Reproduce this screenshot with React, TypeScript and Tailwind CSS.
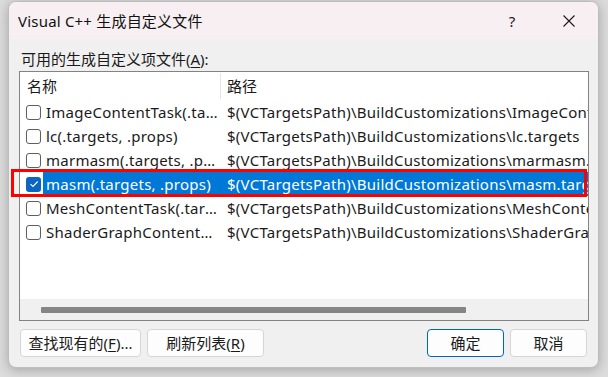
import React from "react";

const FONT = {
  fontFamily: '"Noto Sans", "Noto Sans CJK SC", sans-serif',
};

const rows = [
  { name: "ImageContentTask(.targets, .props)", path: "$(VCTargetsPath)\\BuildCustomizations\\ImageContentTask.targets", checked: false },
  { name: "lc(.targets, .props)", path: "$(VCTargetsPath)\\BuildCustomizations\\lc.targets", checked: false },
  { name: "marmasm(.targets, .props)", path: "$(VCTargetsPath)\\BuildCustomizations\\marmasm.targets", checked: false },
  { name: "masm(.targets, .props)", path: "$(VCTargetsPath)\\BuildCustomizations\\masm.targets", checked: true },
  { name: "MeshContentTask(.targets, .props)", path: "$(VCTargetsPath)\\BuildCustomizations\\MeshContentTask.targets", checked: false },
  { name: "ShaderGraphContentTask(.targets, .props)", path: "$(VCTargetsPath)\\BuildCustomizations\\ShaderGraphContentTask.targets", checked: false },
];

function CheckBox({ checked }: { checked: boolean }) {
  if (checked) {
    return (
      <div className="w-[15px] h-[15px] rounded-[3px] bg-[#0a66c2] flex items-center justify-center shrink-0">
        <svg width="10" height="8" viewBox="0 0 10 8">
          <path d="M1.5 4.2 L4 6.5 L8.7 1.5" stroke="#fff" strokeWidth="1.1" fill="none" />
        </svg>
      </div>
    );
  }
  return <div className="w-[15px] h-[15px] rounded-[3px] border border-[#5e5e5e] bg-white shrink-0" />;
}

export default function App() {
  return (
    <div className="w-[608px] h-[377px] bg-[#dcdcdc] relative overflow-hidden text-[#1a1a1a]" style={FONT}>
      <div className="absolute left-[8px] top-[1px] w-[591px] h-[367px] rounded-[8px] overflow-hidden bg-[#f0f0f0] border border-[#bdbdbd] shadow-[0_2px_12px_rgba(0,0,0,0.25)] flex flex-col">
        {/* title bar */}
        <div className="h-[37px] bg-[#f7eff2] flex items-center pl-[9px] pr-[20px] shrink-0">
          <div className="text-[15px] leading-[20px] flex-1 text-[#111] tracking-[0.2px]">Visual C++ 生成自定义文件</div>
          <div className="text-[15px] leading-[20px] w-[16px] text-center mr-[43px]">?</div>
          <svg width="12" height="12" viewBox="0 0 12 12" className="mr-[3px]">
            <path d="M0.5 0.5 L11.5 11.5 M11.5 0.5 L0.5 11.5" stroke="#1a1a1a" strokeWidth="1.1" />
          </svg>
        </div>
        {/* body */}
        <div className="flex flex-col px-[10px] pt-[10px]">
          <div className="text-[15px] leading-[20px] pl-[2px]">
            可用的生成自定义项文件(<span className="underline underline-offset-2">A</span>):
          </div>
          <div className="mt-[2px] w-[570px] h-[250px] border border-[#838383] bg-white flex flex-col">
            {/* header */}
            <div className="h-[28px] flex items-stretch text-[15px] shrink-0">
              <div className="w-[201px] pl-[7px] flex items-center border-r border-[#e5e5e5] my-[1px]">名称</div>
              <div className="pl-[6px] flex items-center">路径</div>
            </div>
            {/* rows */}
            <div className="flex flex-col flex-1">
              {rows.map((r, i) => (
                <div key={i} className="h-[24px] flex items-center text-[15px] whitespace-nowrap tracking-[0.25px]">
                  <div className="w-[23px] pl-[6px] shrink-0 flex items-center">
                    <CheckBox checked={r.checked} />
                  </div>
                  <div className={`flex flex-1 h-full items-center min-w-0 ${r.checked ? "bg-[#0078d7] text-white" : ""}`}>
                    <div className="w-[178px] pl-[3px] pr-[3px] overflow-hidden text-ellipsis shrink-0">{r.name}</div>
                    <div className="pl-[6px] overflow-hidden flex-1 min-w-0">{r.path}</div>
                  </div>
                </div>
              ))}
            </div>
            {/* scrollbar */}
            <div className="h-[21px] bg-[#f0f0f0] flex items-center pl-[21px] shrink-0">
              <div className="w-[425px] h-[6px] bg-[#858585] rounded-[1px]" />
            </div>
          </div>
          {/* buttons */}
          <div className="mt-[8px] flex items-center text-[15px]">
            <button className="w-[121px] h-[28px] rounded-[4px] border border-[#d5d5d5] bg-[#fdfdfd] ml-[1px] flex items-center justify-center">
              查找现有的(<span className="underline underline-offset-2">F</span>)...
            </button>
            <button className="w-[117px] h-[28px] rounded-[4px] border border-[#d5d5d5] bg-[#fdfdfd] ml-[6px] flex items-center justify-center">
              刷新列表(<span className="underline underline-offset-2">R</span>)
            </button>
            <div className="flex-1" />
            <button className="w-[77px] h-[28px] rounded-[4px] border border-[#0067c0] bg-[#fdfdfd] flex items-center justify-center">
              确定
            </button>
            <button className="w-[77px] h-[28px] rounded-[4px] border border-[#d5d5d5] bg-[#fdfdfd] ml-[6px] mr-[1px] flex items-center justify-center">
              取消
            </button>
          </div>
        </div>
      </div>
      {/* red annotation */}
      <div className="absolute left-[11px] top-[169px] w-[576px] h-[28px] border-[3px] border-[#ff0000] pointer-events-none" />
    </div>
  );
}
